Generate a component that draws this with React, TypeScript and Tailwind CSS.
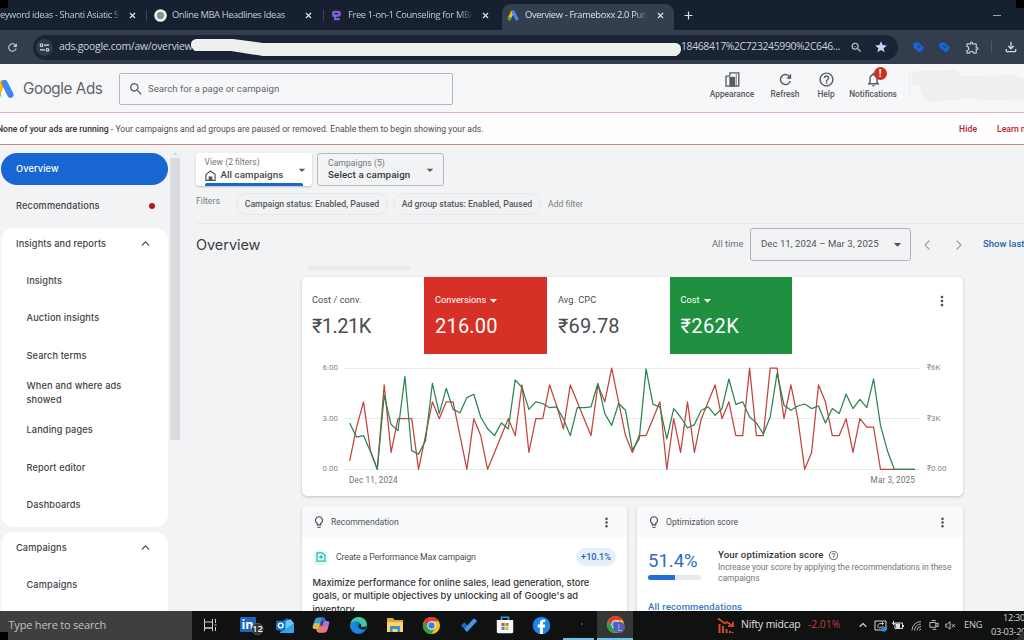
import React from "react";
import { ChevronLeft, ChevronRight, ChevronUp, X } from "lucide-react";
import {
  MdHelpOutline,
  MdLightbulbOutline,
  MdMoreVert,
  MdOutlineExtension,
  MdOutlineFileDownload,
  MdRefresh,
  MdSearch,
  MdStar,
  MdZoomOut,
  MdArrowDropDown,
  MdNotificationsNone,
} from "react-icons/md";

const conversions = [
  0.5, 2.5, 4, 1.1, 0, 5, 1, 3, 3, 3, 0, 2, 4, 3, 4, 4, 2, 0, 3, 2, 0, 1, 2, 3, 2, 5, 1, 3, 3, 5, 3.8, 2.4, 5, 4, 3, 2,
  5, 4, 6, 4, 2, 1, 2, 2, 3, 4, 0, 3, 1, 4, 1, 3, 4, 5, 3, 4, 2, 2, 6, 2, 2, 6, 6, 3, 5, 3, 0, 1, 5, 4, 2, 2, 3, 1, 3,
  2.5, 2.5, 0, 0, 0, 0, 0, 0,
];
const cost = [
  2.75, 1.9, 2, 1.05, 0, 4.4, 2.65, 2.3, 5.5, 1.1, 0.9, 1.7, 5.1, 3.3, 4.8, 3.55, 3.35, 4.25, 4.45, 3.1, 2.4, 2, 2.75,
  2.4, 5.3, 4.85, 3.55, 4, 3.9, 3.65, 3.7, 3, 2, 3.65, 3.65, 3.7, 5.1, 3.3, 2.6, 3.9, 3.5, 1.15, 1.8, 5.95, 3.85, 3.7,
  1.8, 3.6, 3.1, 2.45, 2.65, 3.5, 3.7, 3.2, 3.6, 5.35, 3.85, 4, 3.1, 2.75, 2.1, 3.1, 5.7, 3.8, 3.5, 3.75, 3.87, 3.6,
  3.75, 2.75, 3.6, 3.3, 4.45, 3.6, 4.15, 3.65, 5.35, 2.6, 1.1, 0, 0, 0, 0,
];
const toPoints = (series: number[]) =>
  series.map((v, i) => `${(5.7 + i * 6.894).toFixed(1)},${(103.3 - v * 16.87).toFixed(1)}`).join(" ");

function AdsLogo({ className }: { className: string }) {
  return (
    <svg viewBox="0 0 24 22" className={className}>
      <path d="M9.5 4.5 3.8 17" stroke="#fbbc04" strokeWidth="6.4" strokeLinecap="round" />
      <path d="M12 4.3 18.6 17.3" stroke="#4285f4" strokeWidth="6.8" strokeLinecap="round" />
      <circle cx="4.3" cy="17.6" r="3.5" fill="#34a853" />
    </svg>
  );
}

function Tab({ width, icon, label, labelClass }: { width: string; icon?: React.ReactNode; label: string; labelClass: string }) {
  return (
    <div className={`flex h-full shrink-0 items-center ${width}`}>
      {icon}
      <span className={`block overflow-hidden whitespace-nowrap ${labelClass}`}>{label}</span>
      <X className="ml-auto size-[9px] shrink-0 text-[#e3e8f0]" strokeWidth={3} />
    </div>
  );
}

function BrowserChrome() {
  return (
    <div className="[font-family:'Open_Sans',sans-serif]">
      <div className="flex h-[30px] items-center overflow-hidden bg-[#172031] text-[9.3px] text-[#c3cad6]">
        <Tab
          width="w-[137px]"
          label="eyword ideas - Shanti Asiatic S"
          labelClass="w-[121px] tracking-[-0.38px] [mask-image:linear-gradient(to_right,black_93%,transparent_99%)]"
        />
        <div className="ml-[9px] h-[11px] w-px bg-[#3a4455]" />
        <Tab
          width="w-[166px]"
          icon={
            <svg viewBox="0 0 13 13" className="ml-[7px] mr-[5px] size-[13px] shrink-0">
              <circle cx="6.5" cy="6.5" r="6.3" fill="#f0f2f2" />
              <circle cx="6.5" cy="6.5" r="3.7" fill="#91a09c" />
              <circle cx="6.5" cy="6.5" r="2" fill="none" stroke="#687c78" strokeWidth=".8" />
            </svg>
          }
          label="Online MBA Headlines Ideas"
          labelClass="w-[120px] tracking-[-0.36px]"
        />
        <div className="ml-[10px] h-[11px] w-px bg-[#3a4455]" />
        <Tab
          width="w-[166px]"
          icon={
            <svg viewBox="0 0 10 12" className="ml-[8px] mr-[6px] h-[11px] w-[10px] shrink-0" fill="none" stroke="#8061cf" strokeWidth="2.6">
              <path d="M1 2h5q2 0 2 2t-2 2H3v4h5M1 1.5V6h5" />
            </svg>
          }
          label="Free 1-on-1 Counseling for MBA"
          labelClass="w-[126px] tracking-[-0.34px] [mask-image:linear-gradient(to_right,black_88%,transparent_99%)]"
        />
        <div className="ml-[12px] mt-[4px] flex h-[26px] w-[172px] shrink-0 items-center rounded-t-[9px] bg-[#343e4f] pb-[4px] text-[#dde2ea]">
          <Tab
            width="w-[163px]"
            icon={<AdsLogo className="ml-[5px] mr-[5px] h-[11px] w-[13px] shrink-0" />}
            label="Overview - Frameboxx 2.0 Pune"
            labelClass="w-[124px] tracking-[-0.34px] [mask-image:linear-gradient(to_right,black_88%,transparent_99%)]"
          />
        </div>
        <svg viewBox="0 0 9 9" className="ml-[10px] size-[9px] shrink-0" stroke="#dce1e9" strokeWidth="1.2">
          <path d="M4.5 .5v8M.5 4.5h8" />
        </svg>
        <div className="ml-auto mr-[23px] h-px w-[8px] bg-[#98a1b0]" />
      </div>
      <div className="flex h-[34px] items-center bg-[#343d4e]">
        <MdRefresh className="ml-[6px] size-[13px] shrink-0 text-[#c7ced9]" />
        <div className="ml-[14px] flex h-[25px] w-[865px] shrink-0 items-center rounded-full bg-[#1b2435] text-[10.4px] text-[#cbd1db]">
          <div className="ml-[3px] flex size-[17px] shrink-0 items-center justify-center rounded-full bg-[#303a4b]">
            <svg viewBox="0 0 12 10" className="h-[9px] w-[11px]" fill="none" stroke="#dbe1eb" strokeWidth="1.2">
              <circle cx="2.7" cy="2.4" r="1.5" />
              <circle cx="9.3" cy="7.6" r="1.5" />
              <path d="M5.5 2.4H11M1 7.6h5.5" />
            </svg>
          </div>
          <span className="ml-[6px] w-[132px] shrink-0 whitespace-nowrap tracking-[-0.27px]">ads.google.com/aw/overview</span>
          <svg viewBox="0 0 490 19" preserveAspectRatio="none" className="h-[19px] w-[490px] shrink-0">
            <path d="M5 1H42L72 5H485Q490 6 490 11T485 18H72L40 13L4 13Q0 10 0 6T5 1Z" fill="#edf0ef" />
          </svg>
          <span className="w-[160px] shrink-0 whitespace-nowrap tracking-[-0.35px]">18468417%2C723245990%2C646...</span>
          <MdZoomOut className="ml-[9px] size-[13px] shrink-0" />
          <MdStar className="ml-[11px] size-[14px] shrink-0 text-[#bcd3fb]" />
        </div>
        {[0, 1].map((i) => (
          <svg key={i} viewBox="0 0 12 12" className="ml-[14px] size-[12px] shrink-0">
            <path d="M1 2.2 5.8 1 11.3 5.8Q12 9 7.5 11.3L1.8 6.7Z" fill="#1668d8" />
            <path d="m4.5 4.4 3 3M6.5 4l2.2 2.6" stroke="#153c7c" strokeWidth="1" />
          </svg>
        ))}
        <MdOutlineExtension className="ml-[15px] size-[15px] shrink-0 text-[#bfc7d3]" />
        <div className="ml-[11px] h-[12px] w-px bg-[#505b6d]" />
        <MdOutlineFileDownload className="ml-[11px] size-[16px] shrink-0 text-[#d2d7df]" />
      </div>
    </div>
  );
}

function HeaderAction({ className, label, children }: { className: string; label: string; children: React.ReactNode }) {
  return (
    <div className={`flex shrink-0 flex-col items-center pt-[7px] text-[#565a5f] ${className}`}>
      <div className="flex h-[16px] items-center">{children}</div>
      <span className="mt-[2px] whitespace-nowrap text-[8.3px] font-medium leading-[11px]">{label}</span>
    </div>
  );
}

function AdsHeader() {
  return (
    <header className="flex h-[48px] items-start overflow-hidden bg-[#f6f7f8]">
      <AdsLogo className="-ml-[7px] mt-[15px] h-[20px] w-[23px] shrink-0" />
      <div className="ml-[7px] mt-[13px] w-[96px] shrink-0 whitespace-nowrap text-[15.2px] leading-[24px] tracking-[-0.4px] text-[#5f6368] [font-family:Inter,sans-serif]">
        Google Ads
      </div>
      <div className="mt-[9px] flex h-[32px] w-[334px] shrink-0 items-center rounded-[2px] border border-[#b4b7bb]">
        <MdSearch className="ml-[8px] size-[16px] text-[#5b5f64]" />
        <span className="ml-[4px] text-[9.6px] tracking-[0.02px] text-[#64686d]">Search for a page or campaign</span>
      </div>
      <HeaderAction className="ml-[252px] w-[54px]" label="Appearance">
        <svg viewBox="0 0 15 15" className="size-[15px]" fill="none" stroke="currentColor" strokeWidth="1.3">
          <path d="M5 3.5V.9h8.8v13.2H1V4.2h4.2" />
          <rect x="5" y="5.5" width="4.5" height="8.4" fill="currentColor" />
          <path d="M11.3 2v12" strokeWidth=".7" />
        </svg>
      </HeaderAction>
      <HeaderAction className="ml-[6px] w-[40px]" label="Refresh">
        <MdRefresh className="size-[17px]" />
      </HeaderAction>
      <HeaderAction className="ml-[9px] w-[24px]" label="Help">
        <MdHelpOutline className="size-[17px]" />
      </HeaderAction>
      <HeaderAction className="ml-[7px] w-[56px]" label="Notifications">
        <div className="relative">
          <MdNotificationsNone className="size-[17px]" />
          <div className="absolute -top-[4px] left-[9px] flex size-[13px] items-center justify-center rounded-full bg-[#cb3022] text-[10px] font-bold text-white">
            !
          </div>
        </div>
      </HeaderAction>
      <div className="ml-[8px] mt-[8px] h-[28px] w-px shrink-0 bg-[#eceeef]" />
      <svg viewBox="0 0 118 48" className="h-[48px] w-[118px] shrink-0">
        <path d="M2 11Q4 5 18 7L44 6Q52 8 50 12L103 11Q118 14 118 20V32Q110 38 96 36L54 35L20 38Q11 35 10 22L2 20Z" fill="#efeff0" />
      </svg>
    </header>
  );
}

function AlertBanner() {
  return (
    <div className="flex h-[33px] items-center overflow-hidden border-b border-t-[1.5px] border-b-[#c58b84] border-t-[#e0b2b9] bg-[#fdfdfd] text-[8.6px] text-[#4a4d51]">
      <div className="-ml-[3px] mt-px w-[962px] shrink-0 whitespace-nowrap tracking-[0.04px]">
        <span className="font-medium tracking-[0.02px] text-[#303336]">None of your ads are running</span> - Your campaigns and ad groups are paused or removed. Enable them
        to begin showing your ads.
      </div>
      <span className="mt-px w-[38px] shrink-0 font-medium tracking-[0.1px] text-[#b3262b]">Hide</span>
      <span className="mt-px shrink-0 whitespace-nowrap font-medium text-[#b3262b]">Learn more</span>
    </div>
  );
}

function NavGroup({ title, className, children }: { title: string; className: string; children: React.ReactNode }) {
  return (
    <div className={`ml-px w-[167px] shrink-0 rounded-[13px] bg-white ${className}`}>
      <div className="flex h-[31px] items-center justify-between pl-[15px] pr-[16px]">
        <span>{title}</span>
        <ChevronUp className="size-[13px] text-[#43474b]" strokeWidth={2.2} />
      </div>
      {children}
    </div>
  );
}

const insightItems = ["Insights", "Auction insights", "Search terms", "When and where ads showed", "Landing pages", "Report editor", "Dashboards"];

function Sidebar() {
  return (
    <nav className="flex w-[180px] shrink-0 overflow-hidden text-[9.2px] font-medium tracking-[0.13px] text-[#3f4246] [font-family:Inter,sans-serif]">
      <div className="flex w-[170px] shrink-0 flex-col">
        <div className="ml-px mt-[8px] flex h-[32px] w-[167px] shrink-0 items-center rounded-[16px] bg-[#1766d1] pl-[15px] text-white">
          Overview
        </div>
        <div className="mt-[5px] flex h-[32px] shrink-0 items-center justify-between pl-[16px] pr-[15px]">
          Recommendations
          <span className="size-[6px] rounded-full bg-[#b3161b]" />
        </div>
        <NavGroup title="Insights and reports" className="mt-[6px] h-[299px] pb-1">
          <div className="h-[3px]" />
          {insightItems.map((item) => (
            <div key={item} className="flex h-[37.35px] items-center pl-[25.5px] pr-[40px] leading-[13.5px]">
              {item}
            </div>
          ))}
        </NavGroup>
        <NavGroup title="Campaigns" className="mt-[5px] h-[120px]">
          <div className="flex h-[43px] items-center pl-[25.5px]">Campaigns</div>
        </NavGroup>
      </div>
      <div className="flex flex-col items-center bg-[#f1f2f3]">
        <div className="mt-[7px] border-x-[2px] border-b-[3px] border-x-transparent border-b-[#d3d5d8]" />
        <div className="mt-[3px] h-[282px] w-[10px] bg-[#d9dbde]" />
      </div>
    </nav>
  );
}

function Chip({ className, children }: { className: string; children: React.ReactNode }) {
  return (
    <div className={`flex h-[22px] shrink-0 items-center justify-center whitespace-nowrap rounded-full border border-[#e6e8ea] font-medium text-[#55595d] ${className}`}>
      {children}
    </div>
  );
}

function Metric({ label, value, className, valueClass, caret }: { label: string; value: string; className: string; valueClass: string; caret?: boolean }) {
  return (
    <div className={`shrink-0 pl-[11px] pt-[16px] ${className}`}>
      <div className="flex h-[13px] items-center text-[9.2px] tracking-[0.05px]">
        {label}
        {caret && <MdArrowDropDown className="ml-[-1px] mt-px size-[17px]" />}
      </div>
      <div className={`mt-[7px] text-[20px] leading-[26px] ${valueClass}`}>{value}</div>
    </div>
  );
}

function CardHead({ title }: { title: string }) {
  return (
    <div className="flex h-[31px] items-center rounded-t-[5px] bg-[#f8f9fb] text-[8.6px] text-[#4e5256]">
      <MdLightbulbOutline className="ml-[10px] mt-px size-[14px] text-[#44484c]" />
      <span className="ml-[5px] mt-[2px]">{title}</span>
      <MdMoreVert className="ml-auto mr-[13px] mt-[2px] size-[15px] text-[#484c50]" />
    </div>
  );
}

function PerformanceCard() {
  return (
    <section className="ml-[122px] mt-[7px] h-[219px] w-[661px] shrink-0 overflow-hidden rounded-[5px] bg-white shadow-[0_1px_3px_rgba(60,64,67,0.28)]">
      <div className="flex h-[77px] text-[#4a4d51]">
        <Metric label="Cost / conv." value="₹1.21K" className="w-[122px] !pl-[10px]" valueClass="tracking-[-0.5px]" />
        <Metric label="Conversions" value="216.00" className="w-[123px] bg-[#d73127] text-white" valueClass="tracking-[0.2px]" caret />
        <Metric label="Avg. CPC" value="₹69.78" className="w-[122.5px]" valueClass="tracking-[0.2px]" />
        <Metric label="Cost" value="₹262K" className="w-[122.5px] bg-[#1f8f40] text-white" valueClass="tracking-[0.4px]" caret />
        <MdMoreVert className="ml-auto mr-[13px] mt-[16px] size-[16px]" />
      </div>
      <div className="flex h-[115px] text-[8px] text-[#85888c]">
        <div className="flex w-[42px] shrink-0 flex-col items-end pr-[6px] pt-[9px]">
          <span className="h-[50.6px] shrink-0 leading-[10px]">6.00</span>
          <span className="h-[50.6px] shrink-0 leading-[10px]">3.00</span>
          <span className="leading-[10px]">0.00</span>
        </div>
        <svg viewBox="0 0 576 115" className="h-[115px] w-[576px] shrink-0 overflow-visible" fill="none">
          <path d="M0 14.5H576M0 64.5H576M0 115.5H576" stroke="#e9eaec" strokeWidth="1" />
          <g transform="translate(0 12)">
            <polyline points={toPoints(conversions)} stroke="#c2443e" strokeWidth="1.25" strokeLinejoin="round" />
            <polyline points={toPoints(cost)} stroke="#2c8451" strokeWidth="1.25" strokeLinejoin="round" />
          </g>
        </svg>
        <div className="flex shrink-0 flex-col pl-[7px] pt-[9px] tracking-[-0.05px]">
          <span className="h-[50.6px] shrink-0 leading-[10px]">₹6K</span>
          <span className="h-[50.6px] shrink-0 leading-[10px]">₹3K</span>
          <span className="leading-[10px]">₹0.00</span>
        </div>
      </div>
      <div className="flex justify-between pl-[47px] pr-[48px] pt-[5px] text-[8.2px] leading-[12px] tracking-[0.12px] text-[#6d7175]">
        <span>Dec 11, 2024</span>
        <span>Mar 3, 2025</span>
      </div>
    </section>
  );
}

function BottomCards() {
  return (
    <div className="ml-[122px] mt-[10px] flex shrink-0 gap-[10px]">
      <section className="h-[140px] w-[325px] rounded-[5px] bg-white shadow-[0_1px_3px_rgba(60,64,67,0.25)]">
        <CardHead title="Recommendation" />
        <div className="mt-[11px] flex h-[18px] items-center text-[8.8px] text-[#4d5155]">
          <div className="ml-[11px] flex size-[15px] items-center justify-center rounded-[4px] bg-[#e6f8f5]">
            <svg viewBox="0 0 10 10" className="size-[10px]" fill="none" stroke="#24bfb0" strokeWidth="1.3">
              <path d="M6.3.9H1V9.1H9V3.5L6.3.9ZM5 3.2v3.6M3.2 5h3.6" />
            </svg>
          </div>
          <span className="ml-[8px] mt-px tracking-[-0.18px]">Create a Performance Max campaign</span>
          <span className="ml-auto mr-[11px] flex h-[18px] w-[40px] items-center justify-center rounded-full bg-[#e5eefb] pt-px text-[9.1px] font-medium text-[#2864b5]">
            +10.1%
          </span>
        </div>
        <p className="ml-[10.5px] mt-[10px] w-[300px] text-[9.4px] font-medium leading-[13.3px] text-[#303337] [font-family:Inter,sans-serif]">
          Maximize performance for online sales, lead generation, store
          <br />
          goals, or multiple objectives by unlocking all of Google's ad
          <br />
          inventory.
        </p>
      </section>
      <section className="h-[140px] w-[326px] rounded-[5px] bg-white shadow-[0_1px_3px_rgba(60,64,67,0.25)]">
        <CardHead title="Optimization score" />
        <div className="flex pl-[11px]">
          <div className="w-[70px] shrink-0 pt-[12px]">
            <div className="text-[18.5px] leading-[24px] text-[#2b6bc8]">51.4%</div>
            <div className="mt-[2px] h-[5px] w-[53px] overflow-hidden rounded-full bg-[#e6e9ed]">
              <div className="h-full w-[27px] bg-[#2170d6]" />
            </div>
          </div>
          <div className="pt-[12px]">
            <div className="flex h-[13px] items-center whitespace-nowrap text-[9.6px] font-medium tracking-[0.15px] text-[#2f3236]">
              Your optimization score
              <MdHelpOutline className="ml-[5px] size-[11px] text-[#6b6f74]" />
            </div>
            <p className="whitespace-nowrap text-[8.6px] leading-[10.8px] tracking-[-0.08px] text-[#74787d]">
              Increase your score by applying the recommendations in these
              <br />
              campaigns
            </p>
          </div>
        </div>
        <div className="ml-[11px] mt-[17px] text-[9.5px] font-medium leading-[12px] tracking-[0.18px] text-[#3b77c3]">All recommendations</div>
      </section>
    </div>
  );
}

function Main() {
  return (
    <main className="flex w-[844px] shrink-0 flex-col overflow-hidden">
      <div className="mt-[8px] flex h-[33px] shrink-0 pl-[16px]">
        <div className="flex w-[116px] rounded-[3px] bg-white shadow-[0_1px_2px_rgba(60,64,67,0.3)]">
          <div className="ml-[8.5px] flex w-[98px] flex-col pt-[3px]">
            <span className="text-[8.6px] leading-[12px] text-[#73777c]">View (2 filters)</span>
            <div className="flex h-[14px] items-center text-[9.8px] font-medium text-[#45494d]">
              <svg viewBox="0 0 12 12" className="mr-[5px] size-[11px]" fill="none" stroke="#505458" strokeWidth="1.3">
                <path d="M1 4.8 6 1 11 4.8V11.3H1Z" />
                <path d="M4 11V7H8V11Z" fill="#505458" stroke="none" />
              </svg>
              <span className="whitespace-nowrap tracking-[0.04px]">All campaigns</span>
            </div>
            <div className="mt-[1px] h-[3px] rounded-t-[2px] bg-[#1b67ca]" />
          </div>
          <MdArrowDropDown className="-ml-[9px] mt-[9px] size-[16px] shrink-0 text-[#56595d]" />
        </div>
        <div className="ml-[5px] flex w-[127px] items-center rounded-[3px] border border-[#b6b9bd] pl-[10px]">
          <div className="flex flex-col">
            <span className="text-[8.6px] leading-[11px] tracking-[0.04px] text-[#73777c]">Campaigns (5)</span>
            <span className="whitespace-nowrap text-[9.8px] font-medium leading-[12px] tracking-[0.1px] text-[#34373b]">Select a campaign</span>
          </div>
          <MdArrowDropDown className="ml-auto mr-[5px] size-[16px] text-[#56595d]" />
        </div>
      </div>
      <div className="mt-[7px] flex h-[22px] shrink-0 items-center pl-[16px] text-[8.7px] text-[#777b80]">
        <span className="w-[40px] shrink-0 pb-[4px]">Filters</span>
        <Chip className="w-[152px] pt-px">Campaign status: Enabled, Paused</Chip>
        <Chip className="ml-[5px] w-[148px] pt-px">Ad group status: Enabled, Paused</Chip>
        <span className="ml-[7px] pt-px">Add filter</span>
      </div>
      <div className="ml-[16px] mt-[8px] h-px shrink-0 bg-[#e6e8ea]" />
      <div className="mt-[4px] flex h-[33px] shrink-0 items-center overflow-hidden pl-[16px]">
        <h1 className="w-[516px] shrink-0 pt-px text-[14.5px] tracking-[-0.05px] text-[#3a3d41] [font-family:Inter,sans-serif]">Overview</h1>
        <span className="w-[38px] shrink-0 whitespace-nowrap text-[9.4px] text-[#6d7176]">All time</span>
        <div className="flex h-[33px] w-[161px] shrink-0 items-center rounded-[3px] border border-[#afb2b6] text-[9.6px] text-[#505458]">
          <span className="ml-[10px] whitespace-nowrap tracking-[0.03px]">Dec 11, 2024 – Mar 3, 2025</span>
          <MdArrowDropDown className="ml-auto mr-[4px] size-[17px]" />
        </div>
        <ChevronLeft className="ml-[8px] size-[16px] shrink-0 text-[#a2a5a9]" strokeWidth={2} />
        <ChevronRight className="ml-[16px] size-[16px] shrink-0 text-[#a2a5a9]" strokeWidth={2} />
        <span className="ml-[16px] shrink-0 whitespace-nowrap text-[9.5px] font-medium text-[#2861af]">Show last 30 days</span>
      </div>
      <div className="ml-[128px] mt-[5px] h-[4px] w-[102px] shrink-0 rounded-full bg-[#e7e9eb]" />
      <PerformanceCard />
      <BottomCards />
    </main>
  );
}

function ChromeIcon({ children }: { children?: React.ReactNode }) {
  return (
    <svg viewBox="0 0 20 20" className="size-[19px]">
      <circle cx="10" cy="10" r="9" fill="#f4c21f" />
      <path d="M2.2 5.5A9 9 0 0 1 17.8 5.5H10L6.1 12.3Z" fill="#e13b2e" />
      <path d="M2.2 5.5 6.1 12.3 13.9 12.3 10 19A9 9 0 0 1 2.2 5.5Z" fill="#2ba24c" />
      <circle cx="10" cy="10" r="4.4" fill="#fff" />
      <circle cx="10" cy="10" r="3.4" fill="#3b7de8" />
      {children}
    </svg>
  );
}

function Slot({ className, children }: { className: string; children?: React.ReactNode }) {
  return <div className={`flex h-full shrink-0 items-center justify-center ${className}`}>{children}</div>;
}

function Taskbar() {
  return (
    <footer className="flex h-[29.5px] shrink-0 items-center overflow-hidden bg-[#101111] text-[#d2d2d2] [font-family:'Open_Sans',sans-serif]">
      <div className="flex h-full w-[192px] shrink-0 items-center bg-[#3e3f3f] pl-[8.5px] text-[11px] tracking-[-0.2px] text-[#c0c1c1]">Type here to search</div>
      <Slot className="w-[36px]">
        <svg viewBox="0 0 14 14" className="size-[14px]" fill="none" stroke="#d0d0d0" strokeWidth="1">
          <path d="M1.5 .8V4H9.5V.8M1.5 13.2V10H9.5V13.2M1.5 4V10H9.5V4M12.5 1V5M12.5 9V13M11.5 7H13.5" />
        </svg>
      </Slot>
      <Slot className="w-[42px]">
        <svg viewBox="0 0 26 20" className="ml-[5px] h-[20px] w-[26px]">
          <rect x="1" y="2" width="16" height="15" rx="1" fill="#1d65bd" />
          <text x="2.4" y="14" fontSize="12.5" fontWeight="700" fill="#fff" fontFamily="Open Sans">in</text>
          <circle cx="18.4" cy="14" r="5.7" fill="#303336" stroke="#77797c" strokeWidth=".6" />
          <text x="18.4" y="17.2" fontSize="9" fontWeight="600" textAnchor="middle" fill="#fff" fontFamily="Open Sans">12</text>
        </svg>
      </Slot>
      <Slot className="w-[30px]">
        <svg viewBox="0 0 20 18" className="h-[17px] w-[20px]">
          <path d="M5 6 12 1 19.5 6V17H5Z" fill="#1b62bd" />
          <path d="m8 5 8-2.5 3.5 4.5-9 6.5Z" fill="#62cbf4" />
          <path d="M4 17 19.5 7.5V15.5Q19.5 17 18 17Z" fill="#36a6e8" />
          <rect x=".5" y="4" width="10" height="10" rx="1.4" fill="#1075ca" />
          <circle cx="5.5" cy="9" r="2.5" fill="none" stroke="#fff" strokeWidth="1.5" />
        </svg>
      </Slot>
      <Slot className="w-[42px]">
        <svg viewBox="0 0 18 18" className="size-[18px]">
          <path d="M5.5 1.5H11.5Q9.8 2 9.2 4L7 11.5Q6.5 13 5 13H2.5Q.2 13 .9 10L2.8 4Q3.6 1.5 5.5 1.5Z" fill="#2ba5dc" />
          <path d="M.9 10 1.8 7.2H8.2L7 11.5Q6.5 13 5 13H2.5Q.2 13 .9 10Z" fill="#d9ba42" />
          <path d="M9 1.5H11.5Q13 1.5 13.5 3.5L14 5.2H12Q10.4 5.2 10 6.5L9.2 9H7.8L9.2 4Z" fill="#3b67da" />
          <path d="M12.5 16.5H6.5Q8.2 16 8.8 14L11 6.5Q11.5 5 13 5H15.5Q17.8 5 17.1 8L15.2 14Q14.4 16.5 12.5 16.5Z" fill="#a970df" />
          <path d="M12.5 16.5H6.5Q8.2 16 8.8 14L10 10H16.5L15.2 14Q14.4 16.5 12.5 16.5Z" fill="#ef7089" />
          <path d="M9 16.5H6.5Q5 16.5 4.5 14.5L4.1 13H5Q6.5 13 7 11.5L7.6 9.4H10.1L8.8 14Z" fill="#ef844c" />
        </svg>
      </Slot>
      <Slot className="w-[32px]">
        <svg viewBox="0 0 20 20" className="size-[19px]">
          <circle cx="10" cy="10" r="9" fill="#1675c8" />
          <path d="M2 7C4 1 12-1 17 4Q20 8 18 12H11Q14 8 10 6T2 9Z" fill="#43c99a" />
          <path d="M1 9Q5 4 10 6Q6 8 8 12Q11 16 17 14Q12 20 6 17Q1 14 1 9Z" fill="#1689dd" />
          <path d="M11 8.5Q13.5 8 12.7 11Q15 12.5 18.6 10.5L17 14Q11 15 10 11Z" fill="#111923" />
        </svg>
      </Slot>
      <Slot className="w-[41px]">
        <svg viewBox="0 0 18 16" className="h-[16px] w-[18px]">
          <path d="M1 1H7L8.5 3H17V14H1Z" fill="#dba92e" />
          <path d="M1 5H17V15H1Z" fill="#f8d66c" />
          <path d="M4 9H14V15H11.5V12H6.5V15H4Z" fill="#3e93ca" />
        </svg>
      </Slot>
      <Slot className="w-[33px]">
        <ChromeIcon />
      </Slot>
      <Slot className="w-[41px]">
        <svg viewBox="0 0 18 16" className="h-[16px] w-[18px]">
          <path d="m1 8.5 3.3-3.2L7.5 8.5 4.2 12Z" fill="#2864b6" />
          <path d="m4.2 12 9.7-10.7L17.2 4 7 15Z" fill="#4794eb" />
        </svg>
      </Slot>
      <Slot className="w-[32px]">
        <svg viewBox="0 0 18 18" className="size-[18px]">
          <path d="M5.5 5V1.2h7V5" fill="none" stroke="#3199d9" strokeWidth="1.6" />
          <path d="M.8 4H17.2V16Q17 17.3 15.5 17.3H2.5Q1 17.3.8 16Z" fill="#f5f6f8" />
          <path d="M5.5 7H8.6V10H5.5Z" fill="#e54a31" />
          <path d="M9.4 7H12.5V10H9.4Z" fill="#77ae2d" />
          <path d="M5.5 10.8H8.6V14H5.5Z" fill="#289bd7" />
          <path d="M9.4 10.8H12.5V14H9.4Z" fill="#efb32d" />
        </svg>
      </Slot>
      <Slot className="w-[41px]">
        <svg viewBox="0 0 20 20" className="size-[19px]">
          <circle cx="10" cy="10" r="9.2" fill="#1985ed" />
          <path d="M8.3 19V12H6V9H8.3V7Q8.5 3.5 12 3.6H14V6.3H12.6Q11.5 6.3 11.5 7.5V9H14L13.5 12H11.5V19Z" fill="#fff" />
        </svg>
      </Slot>
      <Slot className="ml-px w-[31px] border-b-2 border-[#71c2e9]">
        <span className="ml-[7px] size-[2px] rounded-full bg-[#c5203d]" />
      </Slot>
      <Slot className="ml-[3px] w-[36px] border-b-2 border-[#71c2e9] bg-[#353636]">
        <ChromeIcon>
          <circle cx="14" cy="13" r="6" fill="#5a5bb5" />
          <text x="14.4" y="16.4" fontSize="9" textAnchor="middle" fill="#b8b8ee" fontFamily="Open Sans">L</text>
        </ChromeIcon>
      </Slot>
      <svg viewBox="0 0 18 17" className="ml-[84px] h-[17px] w-[18px] shrink-0" fill="none" stroke="#d84a24">
        <path d="M1 1.5 8 6.5 10 5 16 9M11 9.2H16V4.7" strokeWidth="1.8" />
        <path d="M2.5 7V16M6 9V16M9.5 12V16M13 14V16M15.5 15V16" strokeWidth="2" />
      </svg>
      <span className="ml-[6px] w-[67px] shrink-0 whitespace-nowrap text-[10.4px] tracking-[-0.15px] text-[#e0e0e0]">Nifty midcap</span>
      <span className="w-[50px] shrink-0 whitespace-nowrap text-[10.4px] tracking-[-0.05px] text-[#c93c42]">-2.01%</span>
      <ChevronUp className="-ml-px size-[12px] shrink-0" strokeWidth={2.2} />
      <svg viewBox="0 0 13 13" className="ml-[5px] size-[13px] shrink-0" fill="none" stroke="#d5d5d5">
        <path d="M1 2H12V11H1Z" />
        <path d="M4 8.5Q3 4.5 7 4.5H9.5M8 3 9.5 4.5 8 6M8.5 7Q7.5 9 4.5 9" strokeWidth=".9" />
        <circle cx="10" cy="10" r="2.6" fill="#298cde" stroke="none" />
      </svg>
      <svg viewBox="0 0 12 9" className="ml-[5px] h-[9px] w-[12px] shrink-0" fill="none" stroke="#e0e0e0">
        <path d="M3 2H10.5V7.5H3ZM11.5 4V6M1.5 0V4M0 2.3H3" />
        <path d="M4.5 3H7.5V6.5H4.5Z" fill="#e0e0e0" />
      </svg>
      <svg viewBox="0 0 11 11" className="ml-[7px] size-[11px] shrink-0" fill="none" stroke="#bfbfbf">
        <path d="M1 10.5A9 9 0 0 1 10 1.5M3.5 10.5A6.5 6.5 0 0 1 10 4M6 10.5A4 4 0 0 1 10 6.5M8.5 10.5A1.5 1.5 0 0 1 10 9" strokeWidth=".9" />
      </svg>
      <svg viewBox="0 0 11 12" className="ml-[7px] h-[12px] w-[10px] shrink-0" fill="none" stroke="#cfcfcf">
        <path d="M1 3.3H7.5V8.5H1ZM7.5 5 10 3.8V8L7.5 7M3 1H7.5M4 10.8H8" />
      </svg>
      <svg viewBox="0 0 12 10" className="ml-[6px] h-[9px] w-[11px] shrink-0" fill="none" stroke="#d2d2d2">
        <path d="M.8 3.4H2.5L5.5.8V9.2L2.5 6.6H.8ZM7.5 3.5 11 7M11 3.5 7.5 7" />
      </svg>
      <span className="ml-[8px] w-[27px] shrink-0 text-[9.3px] tracking-[-0.15px]">ENG</span>
      <div className="flex shrink-0 flex-col whitespace-nowrap text-[9.2px] leading-[14px] tracking-[-0.3px]">
        <span className="pl-[12px]">12:30</span>
        <span>03-03-2025</span>
      </div>
    </footer>
  );
}

export default function App() {
  return (
    <div className="relative flex h-[640px] w-[1024px] flex-col overflow-hidden bg-[#f1f3f4] [font-family:Roboto,sans-serif]">
      <BrowserChrome />
      <AdsHeader />
      <AlertBanner />
      <div className="flex h-[465.5px] shrink-0 overflow-hidden">
        <Sidebar />
        <Main />
      </div>
      <Taskbar />
      <div className="absolute left-0 top-0 size-[8px] bg-black" />
      <div className="absolute right-0 top-0 size-[8px] bg-black" />
      <div className="absolute bottom-0 left-0 size-[8px] bg-black" />
      <svg viewBox="0 0 12 8" className="absolute bottom-0 right-0 h-[8px] w-[12px]">
        <path d="M0 8Q8 7 9 0H12V8Z" fill="#303131" />
      </svg>
    </div>
  );
}
